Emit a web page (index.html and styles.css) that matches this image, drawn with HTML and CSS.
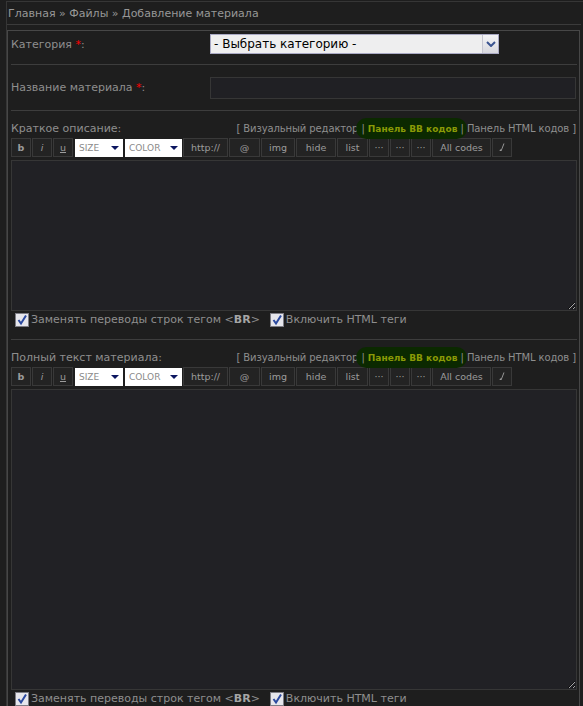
FILE: index.html
```html
<!DOCTYPE html>
<html lang="ru">
<head>
<meta charset="utf-8">
<title>Добавление материала</title>
<link rel="stylesheet" href="styles.css">
</head>
<body>
<div class="frame">
  <div class="crumbs">Главная » Файлы » Добавление материала</div>
  <div class="box">
    <div class="row row-cat">
      <div class="lbl">Категория <span class="req">*</span>:</div>
      <div class="select">
        <span class="select-text">- Выбрать категорию -</span>
        <span class="select-btn"><svg width="10" height="6" viewBox="0 0 10 6"><path d="M1 1 L5 5 L9 1" fill="none" stroke="#3a5390" stroke-width="2"/></svg></span>
      </div>
    </div>
    <div class="row row-name">
      <div class="lbl">Название материала <span class="req">*</span>:</div>
      <input class="text" type="text">
    </div>

    <div class="section">
      <div class="sec-head">
        <span class="lbl">Краткое описание:</span>
        <span class="modes">[ Визуальный редактор <span class="hl"><span class="bar">|</span> <b>Панель BB кодов</b> <span class="bar">|</span></span> Панель HTML кодов ]</span>
      </div>
      <div class="toolbar">
        <span class="btn w20 bold">b</span>
        <span class="btn w20 ital">i</span>
        <span class="btn w20 und">u</span>
        <span class="dd w48"><span>SIZE</span><i class="tri"></i></span>
        <span class="dd w57"><span>COLOR</span><i class="tri"></i></span>
        <span class="btn w45">http://</span>
        <span class="btn w31">@</span>
        <span class="btn w34">img</span>
        <span class="btn w40">hide</span>
        <span class="btn w31">list</span>
        <span class="btn w20">···</span>
        <span class="btn w20">···</span>
        <span class="btn w20">···</span>
        <span class="btn w59">All codes</span>
        <span class="btn w20"><svg width="6" height="9" viewBox="0 0 6 9"><path d="M4.5 0.5 L5.5 0.5 L2.5 8 L0.5 8 L1 6.5 L2.2 6.5 Z" fill="#9a9a9a"/></svg></span>
      </div>
      <textarea class="area area-short"></textarea>
      <div class="opts">
        <label class="opt"><svg class="cb" width="14" height="14" viewBox="0 0 14 14"><rect x="0.5" y="0.5" width="13" height="13" fill="#e6e6ec" stroke="#7d7d85"/><path d="M3.5 7 L6 10.5 L11 2.5" fill="none" stroke="#2c4aa0" stroke-width="2"/></svg><span>Заменять переводы строк тегом &lt;<b class="br">BR</b>&gt;</span></label>
        <label class="opt opt2"><svg class="cb" width="14" height="14" viewBox="0 0 14 14"><rect x="0.5" y="0.5" width="13" height="13" fill="#e6e6ec" stroke="#7d7d85"/><path d="M3.5 7 L6 10.5 L11 2.5" fill="none" stroke="#2c4aa0" stroke-width="2"/></svg><span>Включить HTML теги</span></label>
      </div>
    </div>

    <div class="section">
      <div class="sec-head">
        <span class="lbl">Полный текст материала:</span>
        <span class="modes">[ Визуальный редактор <span class="hl"><span class="bar">|</span> <b>Панель BB кодов</b> <span class="bar">|</span></span> Панель HTML кодов ]</span>
      </div>
      <div class="toolbar">
        <span class="btn w20 bold">b</span>
        <span class="btn w20 ital">i</span>
        <span class="btn w20 und">u</span>
        <span class="dd w48"><span>SIZE</span><i class="tri"></i></span>
        <span class="dd w57"><span>COLOR</span><i class="tri"></i></span>
        <span class="btn w45">http://</span>
        <span class="btn w31">@</span>
        <span class="btn w34">img</span>
        <span class="btn w40">hide</span>
        <span class="btn w31">list</span>
        <span class="btn w20">···</span>
        <span class="btn w20">···</span>
        <span class="btn w20">···</span>
        <span class="btn w59">All codes</span>
        <span class="btn w20"><svg width="6" height="9" viewBox="0 0 6 9"><path d="M4.5 0.5 L5.5 0.5 L2.5 8 L0.5 8 L1 6.5 L2.2 6.5 Z" fill="#9a9a9a"/></svg></span>
      </div>
      <textarea class="area area-full"></textarea>
      <div class="opts">
        <label class="opt"><svg class="cb" width="14" height="14" viewBox="0 0 14 14"><rect x="0.5" y="0.5" width="13" height="13" fill="#e6e6ec" stroke="#7d7d85"/><path d="M3.5 7 L6 10.5 L11 2.5" fill="none" stroke="#2c4aa0" stroke-width="2"/></svg><span>Заменять переводы строк тегом &lt;<b class="br">BR</b>&gt;</span></label>
        <label class="opt opt2"><svg class="cb" width="14" height="14" viewBox="0 0 14 14"><rect x="0.5" y="0.5" width="13" height="13" fill="#e6e6ec" stroke="#7d7d85"/><path d="M3.5 7 L6 10.5 L11 2.5" fill="none" stroke="#2c4aa0" stroke-width="2"/></svg><span>Включить HTML теги</span></label>
      </div>
    </div>
  </div>
</div>
</body>
</html>
```
FILE: styles.css
```css
html, body {
  margin: 0;
  padding: 0;
  background: #1e1e1e;
  overflow: hidden;
}
body {
  font-family: "DejaVu Sans", Verdana, sans-serif;
  font-size: 11px;
  color: #8e8e8e;
}
.frame {
  margin: 1px 0 0 6px;
  width: 576px;
  border-top: 1px solid #363636;
  border-left: 1px solid #363636;
}
.crumbs {
  width: 574px;
  height: 23px;
  line-height: 23px;
  padding-left: 1px;
  box-sizing: border-box;
  color: #979797;
  border-bottom: 1px solid #3b3b3b;
}
.box {
  margin-top: 5px;
  width: 573px;
  box-sizing: border-box;
  border: 1px solid #474747;
  padding: 0 2px 0 3px;
}
.row {
  display: flex;
  align-items: flex-start;
  border-bottom: 1px solid #3d3d3d;
}
.row .lbl {
  width: 199px;
  flex: none;
}
.row-cat {
  padding: 3px 0 10px;
}
.row-cat .lbl { height: 20px; line-height: 20px; padding-top: 1px; box-sizing: border-box; }
.row-name {
  padding: 12px 0 11px;
}
.row-name .lbl { line-height: 22px; }
.req {
  color: #ff0000;
}
.select {
  width: 289px;
  height: 20px;
  box-sizing: border-box;
  border: 1px solid #a9a9c4;
  background: #eeeeef;
  display: flex;
  align-items: center;
  justify-content: space-between;
  color: #000;
  font-size: 12px;
}
.select-text {
  padding-left: 3px;
}
.select-btn {
  width: 16px;
  height: 18px;
  box-sizing: border-box;
  border-left: 1px solid #c5c5d0;
  background: linear-gradient(#f4f4f6, #d8d8de);
  display: flex;
  align-items: center;
  justify-content: center;
}
.text {
  width: 366px;
  height: 22px;
  box-sizing: border-box;
  margin: 0;
  border: 1px solid #363636;
  background: #202024;
  outline: none;
}
.section {
  padding: 10px 0 12px;
  border-bottom: 1px solid #3d3d3d;
}
.sec-head {
  height: 16px;
  line-height: 16px;
  margin-bottom: 1px;
  display: flex;
  justify-content: space-between;
}
.modes {
  padding-right: 1px;
  color: #8e8e8e;
  font-size: 10px;
  letter-spacing: -0.1px;
}
.hl {
  position: relative;
  z-index: 0;
}
.hl::before {
  content: "";
  position: absolute;
  left: -5px;
  right: -3px;
  top: -5px;
  bottom: -5px;
  background: #0b2900;
  border-radius: 12px;
  z-index: -1;
}
.hl b {
  color: #8a9a06;
  font-size: 9px;
  letter-spacing: 0;
}
.bar { color: #8e8e8e; }
.toolbar {
  display: flex;
  gap: 1px;
  height: 19px;
}
.btn {
  box-sizing: border-box;
  height: 19px;
  border: 1px solid #393939;
  background: #232323;
  color: #9c9c9c;
  font-size: 9.5px;
  display: flex;
  align-items: center;
  justify-content: center;
}
.bold { font-weight: bold; }
.ital { font-style: italic; }
.und { text-decoration: underline; }
.w20 { width: 20px; }
.w31 { width: 31px; }
.w34 { width: 34px; }
.w40 { width: 40px; }
.w45 { width: 45px; }
.w48 { width: 48px; }
.w57 { width: 57px; }
.w59 { width: 59px; }
.dd {
  margin-left: 1px;
  box-sizing: border-box;
  height: 18px;
  margin-top: 1px;
  background: #ffffff;
  color: #8a8a8a;
  font-size: 9px;
  display: flex;
  align-items: center;
  justify-content: space-between;
  padding: 0 4px 0 4px;
}
.tri {
  width: 0;
  height: 0;
  border-left: 4px solid transparent;
  border-right: 4px solid transparent;
  border-top: 4px solid #0c1660;
}
.area {
  display: block;
  margin: 3px 0 0;
  width: 566px;
  box-sizing: border-box;
  border: 1px solid #363636;
  background: #212125;
  outline: none;
  resize: both;
}
.area-short { height: 151px; }
.area-full { height: 301px; }
.opts {
  margin-top: 1px;
  height: 15px;
  display: flex;
  align-items: center;
  padding-left: 4px;
}
.opt {
  display: flex;
  align-items: center;
  gap: 2px;
  line-height: 15px;
}
.opt2 {
  margin-left: 10px;
}
.cb {
  flex: none;
}
.br {
  color: #a5a5a5;
}
```
